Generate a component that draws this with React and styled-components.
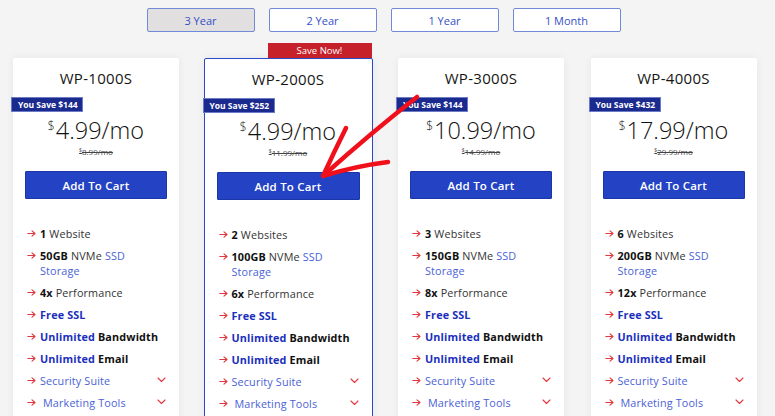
import styled, { createGlobalStyle } from "styled-components";

const GlobalStyle = createGlobalStyle`
  html, body {
    margin: 0;
    padding: 0;
    background: #f4f4f4;
    overflow: hidden;
    font-family: "Open Sans", "Liberation Sans", sans-serif;
  }
`;

const Page = styled.div`
  position: relative;
  width: 775px;
  height: 416px;
  padding: 8px 0 0 13px;
  box-sizing: border-box;
`;

const Wrapper = styled.div`
  width: 743px;
  display: flex;
  flex-direction: column;
`;

const Tabs = styled.div`
  display: flex;
  justify-content: center;
  gap: 14px;
  margin-left: -2px;
`;

const Tab = styled.button`
  width: 108px;
  height: 24px;
  border: 1.5px solid #7189d8;
  border-radius: 2px;
  background: ${({ active }) => (active ? "#e1dfdf" : "#fff")};
  color: #3550c6;
  font-family: "Open Sans", sans-serif;
  font-size: 11px;
  padding: 0;
  cursor: pointer;
`;

const Grid = styled.div`
  display: grid;
  grid-template-columns: repeat(4, 166px);
  column-gap: 26.5px;
  margin-top: 26px;
`;

const Card = styled.article`
  position: relative;
  background: #fff;
  border: ${({ featured }) => (featured ? "1px solid #2a49c8" : "none")};
  margin: ${({ featured }) => (featured ? "0 -1px 0 -2px" : "0")};
  border-radius: 2px;
  box-shadow: 0 0 8px rgba(0, 0, 0, 0.06);
  display: flex;
  flex-direction: column;
  padding-bottom: 30px;
`;

const SaveNow = styled.div`
  position: absolute;
  top: -16px;
  right: 0;
  width: 104px;
  height: 15px;
  background: #c6202a;
  color: #fff;
  font-size: 9.5px;
  line-height: 15px;
  text-align: center;
`;

const Title = styled.h2`
  margin: 11px 0 0;
  font-size: 15px;
  line-height: 18px;
  font-weight: 400;
  text-align: center;
  color: #151515;
  letter-spacing: 0.3px;
`;

const Savings = styled.div`
  align-self: flex-start;
  margin: 10px 0 0 -2px;
  height: 15px;
  padding: 0 6px;
  background: #1a2a8e;
  border: 1px solid #6c7bc6;
  box-sizing: border-box;
  color: #fff;
  font-size: 8.5px;
  font-weight: 700;
  line-height: 13px;
  width: 72px;
  white-space: nowrap;
`;

const Price = styled.div`
  margin-top: 4px;
  text-align: center;
  font-size: 23.5px;
  font-weight: 300;
  line-height: 28px;
  color: #111;

  & sup {
    font-size: 12px;
    vertical-align: 9px;
    line-height: 0;
    margin-right: 1px;
  }
`;

const OldPrice = styled.div`
  margin-top: 3px;
  text-align: center;
  font-size: 8px;
  line-height: 10px;
  color: #444;
  text-decoration: line-through;

  & sup {
    font-size: 5px;
    vertical-align: 3px;
    line-height: 0;
  }
`;

const CartButton = styled.button`
  margin: 14px 12px 0;
  height: 28px;
  background: #2343c4;
  border: 1px solid #1b36a8;
  border-radius: 1px;
  color: #fff;
  font-family: "Open Sans", sans-serif;
  font-size: 11.5px;
  font-weight: 600;
  letter-spacing: 0.2px;
  cursor: pointer;
`;

const Features = styled.ul`
  list-style: none;
  margin: 23px 0 0;
  padding: 0 13px 0 14px;
`;

const Feature = styled.li`
  display: flex;
  align-items: flex-start;
  padding: 3.5px 0;
  font-size: 10.8px;
  line-height: 15px;
  color: #333;
`;

const ArrowBox = styled.span`
  flex: 0 0 13px;
  height: 15px;
  display: flex;
  align-items: center;
`;

const FeatureText = styled.span`
  max-width: 121px;
  padding-left: ${({ indent }) => (indent ? "3px" : "0")};
  letter-spacing: 0.15px;

  & b {
    color: #111;
    font-weight: 700;
  }
`;

const Link = styled.span`
  color: #4a62d6;
`;

const Strong = styled.b`
  && {
    color: #1b2fbd;
  }
`;

const Chevron = styled.span`
  margin-left: auto;
  height: 15px;
  display: flex;
  align-items: center;
`;

const Annotation = styled.svg`
  position: absolute;
  left: 0;
  top: 0;
  pointer-events: none;
`;

const plans = [
  { name: "WP-1000S", save: 144, price: "4.99", old: "8.99", sites: "1", siteLabel: "Website", disk: "50GB", perf: "4x" },
  { name: "WP-2000S", save: 252, price: "4.99", old: "11.99", sites: "2", siteLabel: "Websites", disk: "100GB", perf: "6x", featured: true },
  { name: "WP-3000S", save: 144, price: "10.99", old: "14.99", sites: "3", siteLabel: "Websites", disk: "150GB", perf: "8x" },
  { name: "WP-4000S", save: 432, price: "17.99", old: "29.99", sites: "6", siteLabel: "Websites", disk: "200GB", perf: "12x" },
];

const Arrow = () => (
  <ArrowBox>
    <svg width="9" height="7" viewBox="0 0 9 7" fill="none" stroke="#e0383e" strokeWidth="1.1" strokeLinecap="round" strokeLinejoin="round">
      <path d="M0.8 3.5H8M5 0.8L8 3.5L5 6.2" />
    </svg>
  </ArrowBox>
);

const Down = () => (
  <Chevron>
    <svg width="9" height="6" viewBox="0 0 9 6" fill="none" stroke="#e0383e" strokeWidth="1.1" strokeLinecap="round" strokeLinejoin="round">
      <path d="M1 1L4.5 4.5L8 1" />
    </svg>
  </Chevron>
);

const PlanCard = ({ plan }) => (
  <Card featured={plan.featured}>
    {plan.featured && <SaveNow>Save Now!</SaveNow>}
    <Title>{plan.name}</Title>
    <Savings>You Save ${plan.save}</Savings>
    <Price>
      <sup>$</sup>{plan.price}/mo
    </Price>
    <OldPrice>
      <sup>$</sup>{plan.old}/mo
    </OldPrice>
    <CartButton>Add To Cart</CartButton>
    <Features>
      <Feature>
        <Arrow />
        <FeatureText><b>{plan.sites}</b> {plan.siteLabel}</FeatureText>
      </Feature>
      <Feature>
        <Arrow />
        <FeatureText>
          <b>{plan.disk}</b> NVMe <Link>SSD</Link> <Link>Storage</Link>
        </FeatureText>
      </Feature>
      <Feature>
        <Arrow />
        <FeatureText><b>{plan.perf}</b> Performance</FeatureText>
      </Feature>
      <Feature>
        <Arrow />
        <FeatureText><Strong>Free SSL</Strong></FeatureText>
      </Feature>
      <Feature>
        <Arrow />
        <FeatureText><Strong>Unlimited</Strong> <b>Bandwidth</b></FeatureText>
      </Feature>
      <Feature>
        <Arrow />
        <FeatureText><Strong>Unlimited</Strong> <b>Email</b></FeatureText>
      </Feature>
      <Feature>
        <Arrow />
        <FeatureText><Link>Security Suite</Link></FeatureText>
        <Down />
      </Feature>
      <Feature>
        <Arrow />
        <FeatureText indent><Link>Marketing Tools</Link></FeatureText>
        <Down />
      </Feature>
    </Features>
  </Card>
);

const App = () => {
  const terms = ["3 Year", "2 Year", "1 Year", "1 Month"];

  return (
    <Page>
      <GlobalStyle />
      <Wrapper>
        <Tabs>
          {terms.map((term, i) => (
            <Tab key={term} active={i === 0}>{term}</Tab>
          ))}
        </Tabs>
        <Grid>
          {plans.map((plan) => (
            <PlanCard key={plan.name} plan={plan} />
          ))}
        </Grid>
      </Wrapper>
      <Annotation width="775" height="416" viewBox="0 0 775 416">
        <g fill="none" stroke="#f0101c" strokeWidth="4.5" strokeLinecap="round" strokeLinejoin="round">
          <path d="M417 97 Q372 132 324 175" />
          <path d="M346 128 Q334 152 323 176 Q356 166 388 162" />
        </g>
      </Annotation>
    </Page>
  );
};

export default App;
